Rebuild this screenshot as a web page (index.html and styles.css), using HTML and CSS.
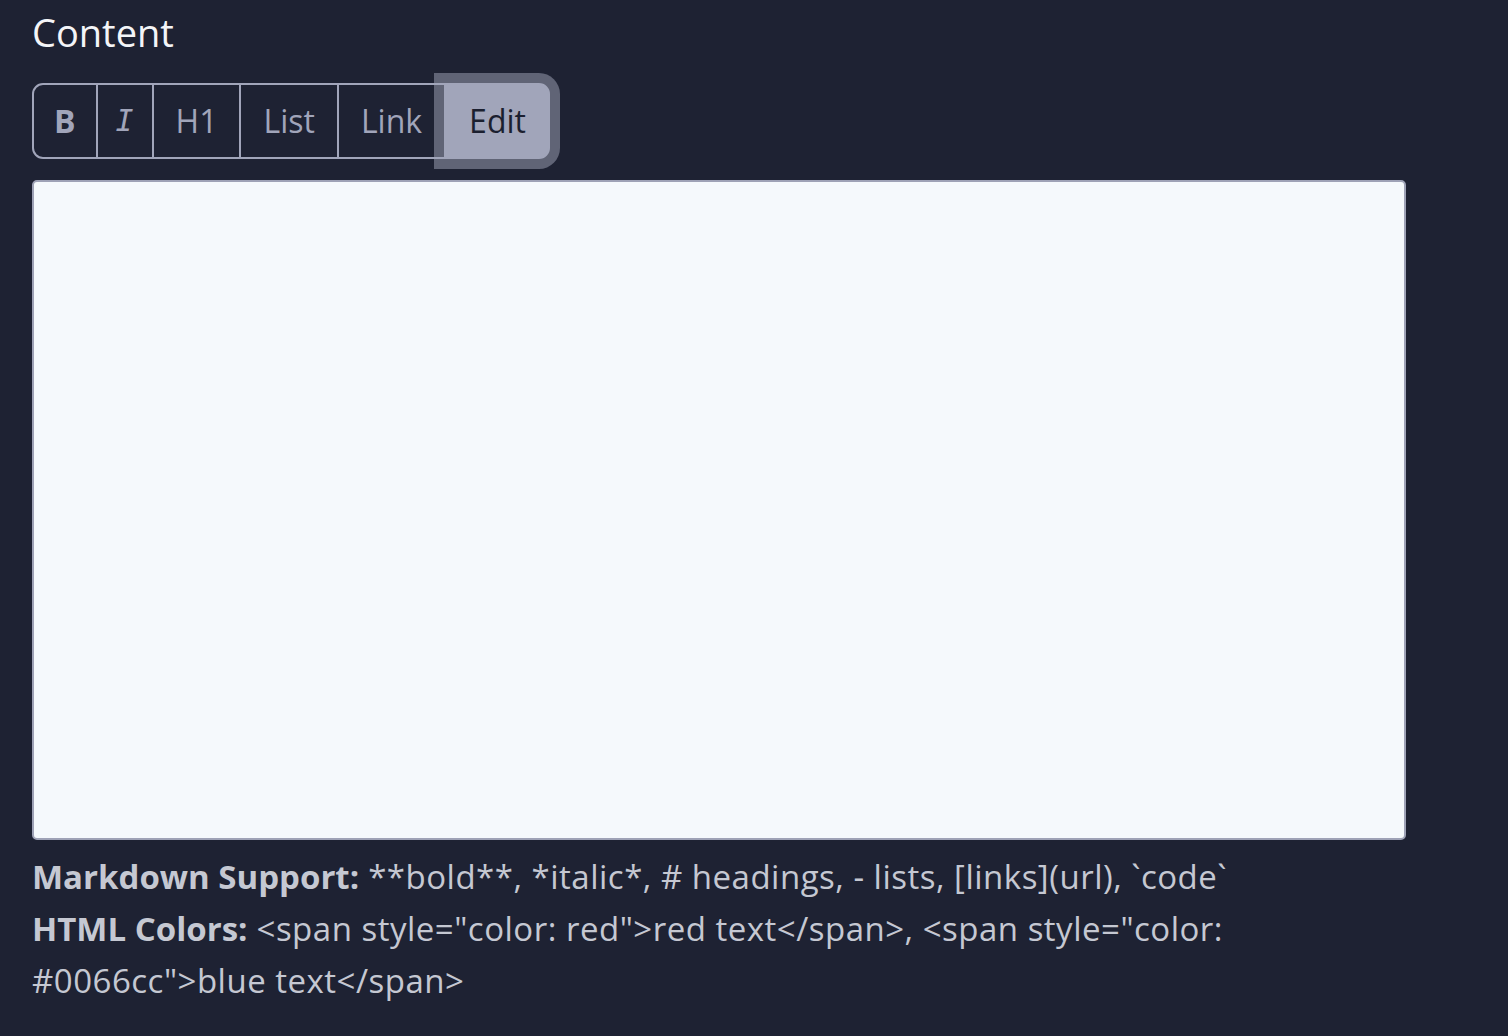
FILE: index.html
```html
<!DOCTYPE html>
<html lang="en">
<head>
<meta charset="utf-8">
<title>Content editor</title>
<link rel="stylesheet" href="styles.css">
</head>
<body>
<div class="field">
  <label class="label" for="content">Content</label>
  <div class="toolbar">
    <button class="tb tb-first tb-bold" type="button">B</button>
    <button class="tb tb-italic" type="button">I</button>
    <button class="tb" type="button">H1</button>
    <button class="tb" type="button">List</button>
    <button class="tb" type="button">Link</button>
    <button class="tb tb-active" type="button">Edit</button>
  </div>
  <textarea id="content" class="editor"></textarea>
  <div class="help">
    <p><strong>Markdown Support:</strong> **bold**, *italic*, # headings, - lists, [links](url), `code`</p>
    <p><strong>HTML Colors:</strong> &lt;span style="color: red"&gt;red text&lt;/span&gt;, &lt;span style="color: #0066cc"&gt;blue text&lt;/span&gt;</p>
  </div>
</div>
</body>
</html>
```

FILE: styles.css
```css
html, body {
  margin: 0;
  padding: 0;
  background: #1e2233;
}
body {
  font-family: "Open Sans", "Noto Sans", sans-serif;
  padding: 8px 32px 0 32px;
}
.field {
  width: 1374px;
  display: flex;
  flex-direction: column;
}
.label {
  display: block;
  font-size: 38px;
  line-height: 48px;
  color: #f4f5f8;
  margin-bottom: 27px;
}
.toolbar {
  display: flex;
  height: 76px;
}
.tb {
  font-family: "Open Sans", "Noto Sans", sans-serif;
  font-size: 32px;
  line-height: 72px;
  height: 76px;
  padding: 0 22px;
  margin: 0 0 0 -2px;
  background: transparent;
  color: #a1a5ba;
  border: 2px solid #a1a5ba;
  cursor: pointer;
  position: relative;
}
.tb-first {
  margin-left: 0;
  padding: 0 20px;
  border-radius: 11px 0 0 11px;
}
.tb-bold {
  font-weight: 700;
}
.tb-italic {
  font-family: "DejaVu Sans Mono", monospace;
  font-style: italic;
  font-size: 30px;
  padding: 0 18px;
}
.tb-active {
  background: #a1a5ba;
  border-color: #a1a5ba;
  color: #1b1f2f;
  border-radius: 0 11px 11px 0;
  box-shadow: 0 0 0 10px rgba(161, 165, 186, 0.5);
  padding: 0 22px 0 23px;
  z-index: 1;
}
.editor {
  display: block;
  box-sizing: border-box;
  width: 1374px;
  height: 660px;
  margin: 21px 0 0 0;
  background: #f5f9fc;
  border: 2px solid #9ea2b6;
  border-radius: 5px;
  resize: none;
  outline: none;
}
.help {
  margin-top: 11px;
  font-size: 33px;
  line-height: 52px;
  letter-spacing: 0.5px;
  color: #c5c8d2;
}
.help p {
  margin: 0;
}
.help strong {
  font-weight: 700;
  letter-spacing: 0;
}
```
